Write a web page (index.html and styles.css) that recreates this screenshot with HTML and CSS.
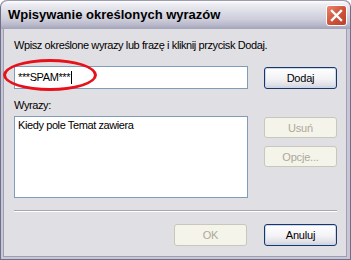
FILE: index.html
```html
<!DOCTYPE html>
<html lang="pl">
<head>
  <meta charset="UTF-8" />
  <title>Wpisywanie określonych wyrazów</title>
  <link rel="stylesheet" href="styles.css">
</head>
<body>
  <div class="window">
    <div class="titlebar">
      <span class="title">Wpisywanie określonych wyrazów</span>
      <button class="close" type="button" aria-label="Zamknij">
        <svg width="13" height="13" viewBox="0 0 13 13">
          <path d="M2 2 L11 11 M11 2 L2 11" stroke="#fff" stroke-width="2.4" stroke-linecap="square"/>
        </svg>
      </button>
    </div>
    <div class="body">
      <p class="intro">Wpisz określone wyrazy lub frazę i kliknij przycisk Dodaj.</p>
      <div class="row">
        <div class="field">
          <div class="textbox">***SPAM***<span class="caret"></span></div>
          <span class="mark"></span>
        </div>
        <button type="button" class="btn default">Dodaj</button>
      </div>
      <p class="label">Wyrazy:</p>
      <div class="row">
        <div class="listbox">Kiedy pole Temat zawiera</div>
        <div class="side">
          <button type="button" class="btn" disabled>Usuń</button>
          <button type="button" class="btn" disabled>Opcje...</button>
        </div>
      </div>
      <div class="separator"></div>
      <div class="footer">
        <button type="button" class="btn" disabled>OK</button>
        <button type="button" class="btn default">Anuluj</button>
      </div>
    </div>
  </div>
</body>
</html>
```

FILE: styles.css
```css
html, body {
  margin: 0;
  padding: 0;
  background: #fff;
}
.window {
  width: 351px;
  height: 260px;
  box-sizing: border-box;
  border-radius: 7px 7px 0 0;
  background: #c6c6d4;
  border: 1px solid #6e6e88;
  border-top: none;
  overflow: hidden;
  font-family: "Liberation Sans", Arial, sans-serif;
}
.titlebar {
  height: 29px;
  box-sizing: border-box;
  display: flex;
  align-items: center;
  justify-content: space-between;
  padding: 0 3px 1px 7px;
  border-radius: 7px 7px 0 0;
  border-top: 1px solid #9c9cb0;
  background: linear-gradient(#ffffff 0%, #ececf2 12%, #dcdce6 40%, #cdcddb 65%, #b9b9cb 85%, #a3a3b8 100%);
}
.title {
  font-weight: bold;
  font-size: 13px;
  color: #000;
}
.close {
  width: 21px;
  height: 21px;
  padding: 0;
  margin-top: 1px;
  border: 1px solid #fff;
  border-radius: 3px;
  background: linear-gradient(135deg, #e9866d, #d0553a 50%, #b9402a);
  display: flex;
  align-items: center;
  justify-content: center;
}
.body {
  height: 227px;
  margin: 0 3px 0 2px;
  border: 1px solid #9e9eb4;
  border-top: none;
  background: #e0dfe3;
  padding: 0 9px 0 10px;
  font-size: 11px;
  letter-spacing: -0.4px;
  color: #000;
}
.intro {
  margin: 0;
  padding-top: 10px;
  line-height: 13px;
}
.row {
  display: flex;
  justify-content: space-between;
  align-items: flex-start;
}
.field {
  position: relative;
  margin-top: 14px;
}
.textbox {
  width: 234px;
  height: 23px;
  box-sizing: border-box;
  border: 1px solid #7f9db9;
  background: #fff;
  padding: 4px 3px 0;
  line-height: 13px;
  display: flex;
  align-items: flex-start;
}
.caret {
  display: inline-block;
  width: 1px;
  height: 13px;
  margin-left: 1px;
  background: #000;
}
.mark {
  position: absolute;
  left: -11px;
  top: -7px;
  width: 88px;
  height: 26px;
  border: 3px solid #e8101a;
  border-radius: 50%;
  pointer-events: none;
}
.row .btn.default {
  margin-top: 15px;
}
.btn {
  width: 73px;
  height: 22px;
  box-sizing: border-box;
  font-family: "Liberation Sans", Arial, sans-serif;
  font-size: 11px;
  letter-spacing: -0.2px;
  color: #000;
  border-radius: 3px;
  padding: 0;
  border: 1px solid #c9c7ba;
  background: #f5f4ea;
}
.btn:disabled {
  color: #aca899;
}
.btn.default {
  border: 1px solid #1a3566;
  background: linear-gradient(#ffffff, #f3f3f6 55%, #dcdce4 90%, #c6c6d2);
  box-shadow: inset 0 0 0 1px #c9d8f1;
}
.label {
  margin: 0;
  padding-top: 10px;
  line-height: 13px;
}
.listbox {
  margin-top: 4px;
  width: 234px;
  height: 82px;
  box-sizing: border-box;
  border: 1px solid #7f9db9;
  background: #fff;
  padding: 2px 3px;
}
.side {
  display: flex;
  flex-direction: column;
  gap: 8px;
  margin-top: 5px;
}
.side .btn {
  height: 21px;
}
.separator {
  margin: 12px 0 0 0;
  height: 1px;
  background: #a7a6aa;
  border-bottom: 1px solid #fff;
}
.footer {
  display: flex;
  justify-content: flex-end;
  gap: 17px;
  margin-top: 12px;
}
```
